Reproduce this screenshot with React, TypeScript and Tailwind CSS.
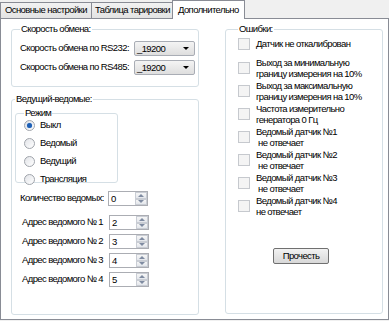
import React from 'react';

const Spin = ({ value }: { value: string }) => (
  <div className="flex h-[15px] w-[40px] border border-[#abadb3] bg-white">
    <span className="flex-1 pl-[2px] leading-[13px] text-black">{value}</span>
    <div className="flex w-[12px] flex-col">
      <div className="flex h-1/2 items-center justify-center border border-[#c9cdd4] bg-gradient-to-b from-[#f6f6f6] to-[#e4e7ec]">
        <div className="h-0 w-0 border-x-[3px] border-b-[3px] border-x-transparent border-b-[#7f8ba1]" />
      </div>
      <div className="flex h-1/2 items-center justify-center border border-[#c9cdd4] bg-gradient-to-b from-[#f6f6f6] to-[#e4e7ec]">
        <div className="h-0 w-0 border-x-[3px] border-t-[3px] border-x-transparent border-t-[#7f8ba1]" />
      </div>
    </div>
  </div>
);

const Combo = () => (
  <div className="flex h-[15px] w-[61px] items-center justify-between rounded-[2px] border border-[#a9adb5] bg-gradient-to-b from-[#f4f4f4] to-[#dedede] pl-[2px] pr-[5px]">
    <span className="leading-[13px]">_19200</span>
    <div className="h-0 w-0 border-x-[3px] border-t-[3px] border-x-transparent border-t-black" />
  </div>
);

const Radio = ({ label, checked }: { label: string; checked?: boolean }) => (
  <div className="flex h-[18px] items-center gap-[5px]">
    <div className="flex h-[11px] w-[11px] items-center justify-center rounded-full border border-[#a0a4ab] bg-gradient-to-br from-[#e2e4e8] to-[#ffffff]">
      {checked && <div className="h-[5px] w-[5px] rounded-full bg-[#1e5fb4] shadow-[0_0_1px_#6aa0e0]" />}
    </div>
    <span>{label}</span>
  </div>
);

const Check = ({ lines }: { lines: string[] }) => (
  <div className="flex h-[23px] items-center gap-[6px]">
    <div className="h-[12px] w-[12px] shrink-0 border border-[#c6c9ce] bg-[#f4f4f4]" />
    <div className="flex flex-col leading-[11px]">
      {lines.map((l) => (
        <span key={l} className="whitespace-pre">{l}</span>
      ))}
    </div>
  </div>
);

const AddrRow = ({ label, value }: { label: string; value: string }) => (
  <div className="flex h-[19px] items-center">
    <span className="w-[94px] pl-[7px]">{label}</span>
    <Spin value={value} />
  </div>
);

export default function App() {
  return (
    <div className="h-[321px] w-[389px] whitespace-nowrap bg-[#f0f0f0] text-[9.5px] tracking-[-0.6px] text-black [font-family:'Liberation_Sans',Arial,sans-serif]">
      {/* Tabs */}
      <div className="flex h-[18px] items-end">
        <div className="flex h-[16px] w-[92px] items-center border border-b-0 border-[#898c95] bg-gradient-to-b from-[#f2f2f2] to-[#e3e3e3] pl-[4px]">
          Основные настройки
        </div>
        <div className="-ml-px flex h-[16px] w-[82px] items-center border border-b-0 border-[#898c95] bg-gradient-to-b from-[#f2f2f2] to-[#e3e3e3] pl-[3px]">
          Таблица тарировки
        </div>
        <div className="relative z-10 -mb-px -ml-px flex h-[19px] w-[73px] items-center border border-b-0 border-[#898c95] bg-white pl-[5px]">
          Дополнительно
        </div>
      </div>

      {/* Panel */}
      <div className="flex h-[302px] w-[389px] gap-[26px] border border-[#898c95] bg-white pl-[10px] pt-[4px]">
        <div className="flex w-[188px] flex-col gap-[6px]">
          <fieldset className="h-[64px] rounded-[3px] border border-[#d5dfe5] pl-[8px] pr-[3px]">
            <legend className="px-[1px] leading-[12px]">Скорость обмена:</legend>
            <div className="mt-[4px] flex h-[19px] items-center justify-between">
              <span>Скорость обмена по RS232:</span>
              <Combo />
            </div>
            <div className="flex h-[19px] items-center justify-between">
              <span>Скорость обмена по RS485:</span>
              <Combo />
            </div>
          </fieldset>

          <fieldset className="h-[222px] rounded-[3px] border border-[#d5dfe5] px-[3px]">
            <legend className="px-[1px] leading-[12px]">Ведущий-ведомые:</legend>
            <fieldset className="mt-[2px] h-[76px] w-[103px] rounded-[3px] border border-[#d5dfe5] pl-[8px]">
              <legend className="px-[1px] leading-[12px]">Режим</legend>
              <div className="-mt-[3px] flex flex-col">
                <Radio label="Выкл" checked />
                <Radio label="Ведомый" />
                <Radio label="Ведущий" />
                <Radio label="Трансляция" />
              </div>
            </fieldset>
            <div className="mt-[6px] flex h-[19px] items-center">
              <span className="w-[93px] pl-[5px]">Количество ведомых:</span>
              <Spin value="0" />
            </div>
            <div className="mt-[5px] flex flex-col">
              <AddrRow label="Адрес ведомого № 1" value="2" />
              <AddrRow label="Адрес ведомого № 2" value="3" />
              <AddrRow label="Адрес ведомого № 3" value="4" />
              <AddrRow label="Адрес ведомого № 4" value="5" />
            </div>
          </fieldset>
        </div>

        <fieldset className="mb-[5px] w-[158px] rounded-[3px] border border-[#d5dfe5] pl-[12px]">
          <legend className="px-[1px] leading-[12px]">Ошибки:</legend>
          <div className="flex flex-col">
            <div className="-mt-[1px] mb-[2px] flex h-[20px] items-center gap-[6px]">
              <div className="h-[12px] w-[12px] shrink-0 border border-[#c6c9ce] bg-[#f4f4f4]" />
              <span>Датчик не откалиброван</span>
            </div>
            <Check lines={['Выход за минимальную', 'границу измерения на 10%']} />
            <Check lines={['Выход за максимальную', 'границу измерения на 10%']} />
            <Check lines={['Частота измерительно', 'генератора 0 Гц']} />
            <Check lines={['Ведомый датчик №1', ' не отвечает']} />
            <Check lines={['Ведомый датчик №2', ' не отвечает']} />
            <Check lines={['Ведомый датчик №3', ' не отвечает']} />
            <Check lines={['Ведомый датчик №4', 'не отвечает']} />
          </div>
          <div className="mt-[31px] flex pl-[35px]">
            <button className="h-[16px] w-[56px] rounded-[2px] border border-[#707070] bg-gradient-to-b from-[#f2f2f2] to-[#d8d8d8] leading-[14px]">
              Прочесть
            </button>
          </div>
        </fieldset>
      </div>
    </div>
  );
}
